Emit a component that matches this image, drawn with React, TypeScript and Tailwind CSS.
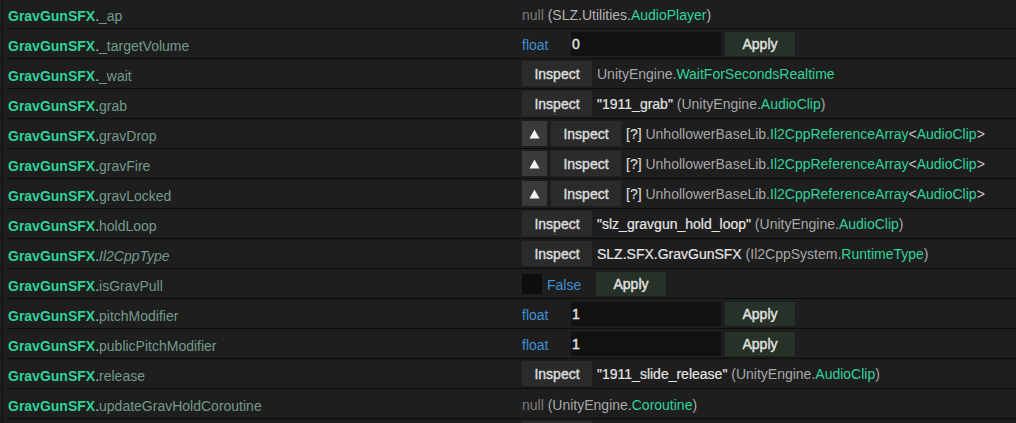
import React from "react";

const G = "text-[#30d49b]";
const GR = "text-[#a8a8a8]";
const W = "text-[#e4e4e4] [-webkit-text-stroke:0.2px_#e4e4e4]";
const NUL = "text-[#7c7c7c]";

function Name({ member, italic }: { member: string; italic?: boolean }) {
  return (
    <div className="w-[515px] shrink-0 pl-px pt-[4px] whitespace-nowrap">
      <span className={`font-bold ${G}`}>GravGunSFX</span>
      <span className="text-[#d0d0d0]">.</span>
      <span className={`text-[#729b8b] ${italic ? "italic" : ""}`}>{member}</span>
    </div>
  );
}

function Row({ children }: { children: React.ReactNode }) {
  return (
    <div className="flex items-center h-[30px] border-b border-[#0c0c0c] shrink-0">{children}</div>
  );
}

function Inspect() {
  return (
    <div className="w-[70px] h-[25px] shrink-0 bg-[#2b2b2b] flex items-center justify-center text-[14px] text-[#dedede] [-webkit-text-stroke:0.4px_#dedede]">
      Inspect
    </div>
  );
}

function Apply({ className = "" }: { className?: string }) {
  return (
    <div
      className={`w-[70px] h-[24px] shrink-0 bg-[#263227] flex items-center justify-center text-[14px] text-[#e2e2e2] [-webkit-text-stroke:0.4px_#e2e2e2] ${className}`}
    >
      Apply
    </div>
  );
}

function Arrow() {
  return (
    <div className="w-[25px] h-[25px] shrink-0 bg-[#3a3a3a] flex items-center justify-center">
      <svg width="11" height="10" viewBox="0 0 11 10">
        <polygon points="5.5,0.5 10.5,9.5 0.5,9.5" fill="#f4f4f4" />
      </svg>
    </div>
  );
}

function FloatRow({ member, value }: { member: string; value: string }) {
  return (
    <Row>
      <Name member={member} />
      <div className="flex items-center">
        <span className="w-[49px] text-[#3f91d4] pt-[2px]">float</span>
        <div className="w-[150px] h-[24px] bg-[#111111] flex items-center pl-[1px] text-[#e4e4e4] [-webkit-text-stroke:0.4px_#e4e4e4] pt-[1px]">
          {value}
        </div>
        <Apply className="ml-[4px]" />
      </div>
    </Row>
  );
}

function ArrayRow({ member }: { member: string }) {
  return (
    <Row>
      <Name member={member} />
      <div className="flex items-center whitespace-nowrap">
        <Arrow />
        <div className="ml-[4px]">
          <Inspect />
        </div>
        <span className="ml-[5px]">
          <span className="text-[#d8d8d8] [-webkit-text-stroke:0.2px_#d8d8d8]">[?] </span>
          <span className={GR}>UnhollowerBaseLib.</span>
          <span className={G}>Il2CppReferenceArray</span>
          <span className="text-[#c4c4c4]">&lt;</span>
          <span className={G}>AudioClip</span>
          <span className="text-[#c4c4c4]">&gt;</span>
        </span>
      </div>
    </Row>
  );
}

function InspectRow({ member, children, italic }: { member: string; children: React.ReactNode; italic?: boolean }) {
  return (
    <Row>
      <Name member={member} italic={italic} />
      <div className="flex items-center whitespace-nowrap">
        <Inspect />
        <span className="ml-[5px] pt-[1px]">{children}</span>
      </div>
    </Row>
  );
}

function AudioClipText({ name }: { name: string }) {
  return (
    <>
      <span className={W}>"{name}"</span>
      <span className={GR}> (UnityEngine.</span>
      <span className={G}>AudioClip</span>
      <span className={GR}>)</span>
    </>
  );
}

export default function App() {
  return (
    <div className="w-[1016px] h-[423px] overflow-hidden bg-[#1e1e1e] flex font-['Liberation_Sans',Arial,sans-serif] text-[14px] leading-[16px]">
      <div className="w-[7px] shrink-0 pl-[2px]">
        <div className="w-px h-full bg-[#0f0f0f]" />
      </div>
      <div className="flex-1 flex flex-col -mt-px">
        <Row>
          <Name member="_ap" />
          <div className="whitespace-nowrap pt-[3px]">
            <span className={NUL}>null</span>
            <span className="text-[#b4b4b4]"> (SLZ.Utilities.</span>
            <span className={G}>AudioPlayer</span>
            <span className="text-[#b4b4b4]">)</span>
          </div>
        </Row>
        <FloatRow member="_targetVolume" value="0" />
        <InspectRow member="_wait">
          <span className={GR}>UnityEngine.</span>
          <span className={G}>WaitForSecondsRealtime</span>
        </InspectRow>
        <InspectRow member="grab">
          <AudioClipText name="1911_grab" />
        </InspectRow>
        <ArrayRow member="gravDrop" />
        <ArrayRow member="gravFire" />
        <ArrayRow member="gravLocked" />
        <InspectRow member="holdLoop">
          <AudioClipText name="slz_gravgun_hold_loop" />
        </InspectRow>
        <InspectRow member="Il2CppType" italic>
          <span className={W}>SLZ.SFX.GravGunSFX</span>
          <span className={GR}> (Il2CppSystem.</span>
          <span className={G}>RuntimeType</span>
          <span className={GR}>)</span>
        </InspectRow>
        <Row>
          <Name member="isGravPull" />
          <div className="flex items-center">
            <div className="w-[20px] h-[20px] bg-[#0e0e0e]" />
            <span className="ml-[5px] w-[49px] text-[#3f91d4] pt-[2px]">False</span>
            <Apply />
          </div>
        </Row>
        <FloatRow member="pitchModifier" value="1" />
        <FloatRow member="publicPitchModifier" value="1" />
        <InspectRow member="release">
          <AudioClipText name="1911_slide_release" />
        </InspectRow>
        <Row>
          <Name member="updateGravHoldCoroutine" />
          <div className="whitespace-nowrap pt-[3px]">
            <span className={NUL}>null</span>
            <span className={GR}> (UnityEngine.</span>
            <span className={G}>Coroutine</span>
            <span className={GR}>)</span>
          </div>
        </Row>
        <div className="flex h-[30px] shrink-0 pt-[2px]">
          <div className="w-[515px] shrink-0" />
          <div className="w-[70px] h-[25px] bg-[#2b2b2b]" />
        </div>
      </div>
    </div>
  );
}
